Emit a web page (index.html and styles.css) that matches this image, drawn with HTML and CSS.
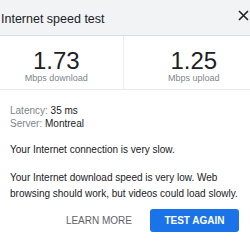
FILE: index.html
```html
<!DOCTYPE html>
<html>
<head>
<meta charset="utf-8">
<link rel="stylesheet" href="styles.css">
</head>
<body>
<div class="dialog">
  <div class="header">
    <span class="title">Internet speed test</span>
    <svg class="close" width="11" height="11" viewBox="0 0 11 11"><path d="M1 1 L10 10 M10 1 L1 10" stroke="#202124" stroke-width="1.6" fill="none"/></svg>
  </div>
  <div class="stats">
    <div class="stat stat-down">
      <div class="num">1.73</div>
      <div class="unit">Mbps download</div>
    </div>
    <div class="stat stat-up">
      <div class="num">1.25</div>
      <div class="unit">Mbps upload</div>
    </div>
  </div>
  <div class="body">
    <div class="meta"><span class="label">Latency:</span> 35 ms</div>
    <div class="meta"><span class="label">Server:</span> Montreal</div>
    <p class="msg">Your Internet connection is very slow.</p>
    <p class="msg">Your Internet download speed is very low. Web browsing should work, but videos could load slowly.</p>
  </div>
  <div class="actions">
    <span class="learn">LEARN MORE</span>
    <span class="again">TEST AGAIN</span>
  </div>
</div>
</body>
</html>
```
FILE: styles.css
```css
html, body { margin: 0; padding: 0; background: #fff; }
body { font-family: "Liberation Sans", Arial, sans-serif; color: #202124; width: 250px; height: 250px; overflow: hidden; }
.header { height: 35px; background: #f1f3f4; border-bottom: 1px solid #dadce0; display: flex; align-items: center; justify-content: space-between; padding: 0 1px 0 1px; }
.title { font-size: 12.5px; color: #202124; margin-top: 2px; }
.close { margin-top: -4px; }
.stats { display: flex; border-bottom: 1px solid #e8eaed; height: 53px; }
.stat { flex: 1; display: flex; flex-direction: column; align-items: center; padding-top: 13px; }
.stat-down { padding-right: 10px; }
.stat-up { padding-left: 14px; border-left: 1px solid #eceef0; }
.num { font-size: 24px; line-height: 24px; color: #202124; }
.unit { font-size: 9px; color: #80868b; margin-top: 0; }
.body { padding: 14px 10px 0; font-size: 10px; }
.meta { line-height: 13px; color: #202124; }
.label { color: #80868b; }
.msg { margin: 12px 0 0; line-height: 16px; color: #202124; }
.actions { display: flex; justify-content: flex-end; align-items: center; gap: 18px; padding: 7px 11px 0 0; }
.learn { font-size: 10px; color: #5f6368; }
.again { background: #1a73e8; color: #fff; font-size: 10px; font-weight: bold; width: 89px; height: 23px; border-radius: 3px; display: flex; align-items: center; justify-content: center; }
```
